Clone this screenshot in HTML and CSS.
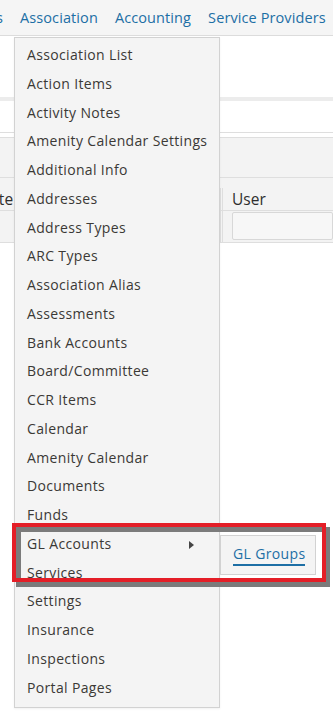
FILE: index.html
```html
<!DOCTYPE html>
<html lang="en">
  <head>
    <meta charset="UTF-8" />
    <meta name="viewport" content="width=device-width, initial-scale=1.0" />
    <title>Association Menu</title>
    <link rel="stylesheet" href="styles.css">
  </head>
  <body>
    <nav class="top-nav">
      <div class="nav-cut"><a href="#">Units</a></div>
      <a href="#">Association</a>
      <a href="#">Accounting</a>
      <a href="#">Service Providers</a>
    </nav>

    <div class="page">
      <div class="stripe"></div>
      <div class="rule"></div>
      <div class="grid">
        <div class="grid-toolbar"></div>
        <div class="grid-head">
          <div class="col col-date">Date</div>
          <div class="col col-user">User</div>
        </div>
        <div class="grid-filter">
          <div class="col col-date"></div>
          <div class="col col-user"><div class="filter-input"></div></div>
        </div>
      </div>
    </div>

    <!-- dropdown -->
    <ul class="dropdown">
      <li>Association List</li>
      <li>Action Items</li>
      <li>Activity Notes</li>
      <li>Amenity Calendar Settings</li>
      <li>Additional Info</li>
      <li>Addresses</li>
      <li>Address Types</li>
      <li>ARC Types</li>
      <li>Association Alias</li>
      <li>Assessments</li>
      <li>Bank Accounts</li>
      <li>Board/Committee</li>
      <li>CCR Items</li>
      <li>Calendar</li>
      <li>Amenity Calendar</li>
      <li>Documents</li>
      <li>Funds</li>
      <li class="has-sub">
        GL Accounts
        <span class="arrow"></span>
        <div class="submenu"><a href="#">GL Groups</a></div>
      </li>
      <li>Services</li>
      <li>Settings</li>
      <li>Insurance</li>
      <li>Inspections</li>
      <li>Portal Pages</li>
    </ul>

    <!-- annotation frame -->
    <div class="mark-shadow"></div>
    <div class="mark"></div>
  </body>
</html>
```

FILE: styles.css
```css
* {
  margin: 0;
  padding: 0;
  box-sizing: border-box;
}

body {
  font-family: "Open Sans", "Liberation Sans", sans-serif;
  font-size: 14px;
  font-weight: 500;
  letter-spacing: 0.35px;
  color: #3b3936;
  background: #fff;
  width: 333px;
  height: 717px;
  overflow: hidden;
  position: relative;
}

a {
  text-decoration: none;
  color: inherit;
}

/* top navigation */
.top-nav {
  display: flex;
  align-items: center;
  gap: 17px;
  height: 36px;
  background: #f5f5f5;
  border-bottom: 1px solid #dcdcdc;
  color: #1d6fa5;
  font-size: 14.5px;
  letter-spacing: 0.1px;
  white-space: nowrap;
}

.nav-cut {
  flex: 0 0 3px;
  display: flex;
  justify-content: flex-end;
  overflow: hidden;
}

/* page behind the menu */
.stripe {
  margin-top: 61px;
  height: 4px;
  background: #ececec;
}

.rule {
  margin-top: 31px;
  height: 1px;
  background: #dedede;
}

.grid {
  margin-top: 4px;
  border-top: 1px solid #dedede;
  border-bottom: 1px solid #dedede;
  background: #f3f3f3;
}

.grid-toolbar {
  height: 40px;
  border-bottom: 1px solid #dedede;
}

.grid-head,
.grid-filter {
  display: flex;
}

.grid-head {
  height: 33px;
  border-bottom: 1px solid #dedede;
  align-items: flex-end;
  font-size: 15.5px;
  font-weight: 400;
  letter-spacing: 0;
  color: #2e2e2e;
}

.grid-filter {
  height: 31px;
}

.col-date {
  width: 221px;
  border-right: 1px solid #dedede;
  text-align: left;
  text-indent: -21px;
}

.col-user {
  flex: 1;
  border-left: 1px solid #dedede;
  margin-left: 1px;
  padding-left: 9px;
}

.grid-filter .col {
  padding-top: 1px;
}

.filter-input {
  height: 28px;
  background: #f7f7f7;
  border: 1px solid #d8d8d8;
  border-radius: 2px;
}

/* dropdown menu */
.dropdown {
  position: absolute;
  left: 14px;
  top: 37px;
  width: 206px;
  list-style: none;
  background: #f4f4f4;
  border: 1px solid #d2d2d2;
  padding: 3px 0 5px;
  box-shadow: 0 1px 2px rgba(0, 0, 0, 0.06);
}

.dropdown li {
  height: 28.75px;
  line-height: 28.75px;
  padding-left: 12px;
  white-space: nowrap;
}

.dropdown .has-sub {
  position: relative;
}

.arrow {
  position: absolute;
  left: 174px;
  top: 11px;
  width: 0;
  height: 0;
  border-top: 4px solid transparent;
  border-bottom: 4px solid transparent;
  border-left: 5px solid #444;
}

.submenu {
  position: absolute;
  left: 205px;
  top: 5px;
  width: 96px;
  height: 40px;
  background: #f4f4f4;
  border: 1px solid #d2d2d2;
  padding: 0 0 0 12px;
  line-height: 36px;
}

.submenu a {
  color: #1d6fa5;
  border-bottom: 2px solid #1d6fa5;
  padding-bottom: 1px;
}

/* red highlight frame */
.mark,
.mark-shadow {
  position: absolute;
  pointer-events: none;
}

.mark {
  left: 12px;
  top: 523px;
  width: 314px;
  height: 59px;
  border: 4px solid #e41e27;
}

.mark-shadow {
  left: 16px;
  top: 527px;
  width: 314px;
  height: 60px;
  border: 5px solid #7b7b7b;
}
```
